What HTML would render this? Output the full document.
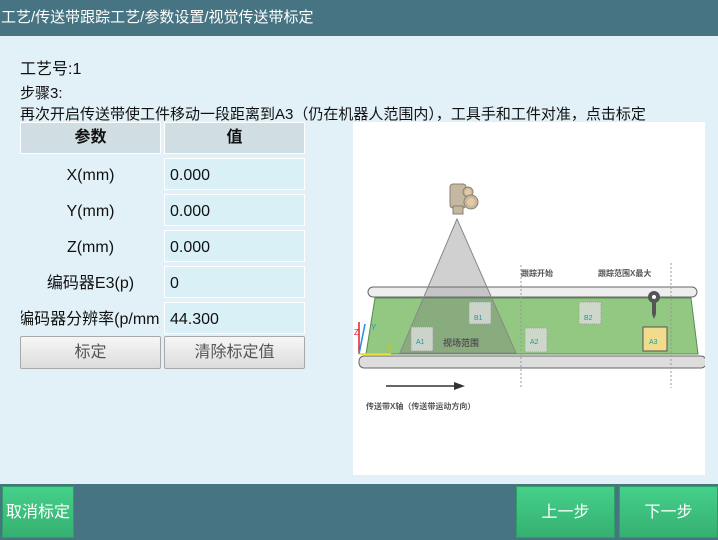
<!DOCTYPE html>
<html><head><meta charset="utf-8"><style>
*{margin:0;padding:0;box-sizing:border-box}
body{width:718px;height:540px;overflow:hidden;background:#e2f1f7;font-family:"Liberation Sans","Noto Sans CJK SC",sans-serif;position:relative;color:#111}
.hdr{position:absolute;left:0;top:0;width:718px;height:36px;background:#477483;color:#fff;font-size:15px;line-height:36px;padding-left:1px}
.t{position:absolute;font-size:15px;white-space:nowrap}
.c{position:absolute;height:32px;line-height:33px;font-size:16px;white-space:nowrap;overflow:hidden;border:1px solid transparent}
.h{background:#d0dde2;border:1px solid #fff;text-align:center;font-weight:bold;font-size:16px;line-height:30px}
.lab{text-align:center}
.val{background:#daf0f7;border:1px solid #fff;padding-left:5px}
.btn{position:absolute;height:33px;border:1px solid #a8a8a8;border-radius:2px;background:linear-gradient(#f6f6f6,#dcdcdc);text-align:center;line-height:31px;font-size:16px;color:#555}
.ftr{position:absolute;left:0;top:484px;width:718px;height:56px;background:#477483}
.g{position:absolute;top:486px;height:52px;background:linear-gradient(#45d08a,#35b070);border:1px solid #2e9e62;color:#fff;font-size:16px;line-height:52px;text-align:center}
</style></head><body>
<div class="hdr">工艺/传送带跟踪工艺/参数设置/视觉传送带标定</div>
<div class="t" style="left:20px;top:55px;font-size:16px">工艺号:1</div>
<div class="t" style="left:20px;top:82px">步骤3:</div>
<div class="t" style="left:20px;top:103px">再次开启传送带使工件移动一段距离到A3（仍在机器人范围内），工具手和工件对准，点击标定</div>
<div class="c h" style="left:20px;top:122px;width:141px">参数</div>
<div class="c h" style="left:164px;top:122px;width:141px">值</div>
<div class="c lab" style="left:20px;top:158px;width:141px">X(mm)</div><div class="c val" style="left:164px;top:158px;width:141px">0.000</div>
<div class="c lab" style="left:20px;top:194px;width:141px">Y(mm)</div><div class="c val" style="left:164px;top:194px;width:141px">0.000</div>
<div class="c lab" style="left:20px;top:230px;width:141px">Z(mm)</div><div class="c val" style="left:164px;top:230px;width:141px">0.000</div>
<div class="c lab" style="left:20px;top:266px;width:141px">编码器E3(p)</div><div class="c val" style="left:164px;top:266px;width:141px">0</div>
<div class="c" style="left:20px;top:302px;width:141px"><div style="position:absolute;left:-30px;width:201px;text-align:center;top:0">编码器分辨率(p/mm)</div></div><div class="c val" style="left:164px;top:302px;width:141px">44.300</div>
<div class="btn" style="left:20px;top:336px;width:141px">标定</div>
<div class="btn" style="left:164px;top:336px;width:141px">清除标定值</div>
<svg style="position:absolute;left:353px;top:122px" width="352" height="353" viewBox="0 0 352 353">
<rect width="352" height="353" fill="#fff"/>
<g fill="#c4b8a0" stroke="#8c8070" stroke-width="1"><rect x="97" y="62" width="16" height="24" rx="3"/><circle cx="115" cy="70" r="5"/><circle cx="118" cy="80" r="7"/><rect x="100" y="84" width="10" height="8"/></g>
<circle cx="118" cy="80" r="4" fill="#e8c8a0"/><circle cx="115" cy="70" r="3" fill="#e8c8a0"/>
<path d="M22 176 L338 176 L345 232 L13 232 Z" fill="#93c882" stroke="#5a8a50"/>
<rect x="15" y="165" width="329" height="10" rx="5" fill="#eee" stroke="#666"/>
<rect x="6" y="234" width="347" height="12" rx="5" fill="#ddd" stroke="#666"/>
<polygon points="104,97 47,231 163,231" fill="rgba(120,120,120,0.35)" stroke="#888"/>
<g stroke="#999" stroke-dasharray="2,2"><line x1="168" y1="143" x2="168" y2="266"/><line x1="318" y1="141" x2="318" y2="266"/></g>
<g font-size="8" fill="#555" font-weight="bold"><text x="168" y="154">跟踪开始</text><text x="245" y="154">跟踪范围X最大</text><text x="90" y="224" font-size="9">视场范围</text><text x="13" y="287">传送带X轴（传送带运动方向）</text></g>
<g fill="#ddd" opacity="0.8" stroke="#999" stroke-dasharray="1,1"><rect x="58" y="205" width="22" height="24"/><rect x="116" y="180" width="22" height="22"/><rect x="172" y="206" width="22" height="24"/><rect x="226" y="180" width="22" height="22"/></g>
<rect x="290" y="205" width="24" height="24" fill="#f0dc8c" stroke="#555"/>
<g font-size="7" fill="#1a9aa0"><text x="63" y="222">A1</text><text x="121" y="198">B1</text><text x="177" y="222">A2</text><text x="231" y="198">B2</text><text x="296" y="222">A3</text></g>
<circle cx="301" cy="175" r="6" fill="#555"/><circle cx="301" cy="175" r="2" fill="#fff"/><path d="M299 180 L299 192 L301 197 L303 192 L303 180Z" fill="#555"/>
<g stroke-width="1.5"><line x1="6" y1="232" x2="6" y2="200" stroke="#e02030"/><line x1="6" y1="232" x2="12" y2="202" stroke="#2090e0"/><line x1="6" y1="232" x2="38" y2="232" stroke="#e8d800"/></g>
<text x="1" y="213" font-size="8" fill="#e02030">Z</text><text x="18" y="208" font-size="8" fill="#2090e0">Y</text><text x="34" y="228" font-size="8" fill="#d8c800">X</text>
<line x1="33" y1="264" x2="105" y2="264" stroke="#333" stroke-width="1.5"/><polygon points="101,260 112,264 101,268" fill="#333"/>
</svg>
<div class="ftr"></div>
<div class="g" style="left:2px;width:72px">取消标定</div>
<div class="g" style="left:516px;width:99px">上一步</div>
<div class="g" style="left:619px;width:99px">下一步</div>
</body></html>
